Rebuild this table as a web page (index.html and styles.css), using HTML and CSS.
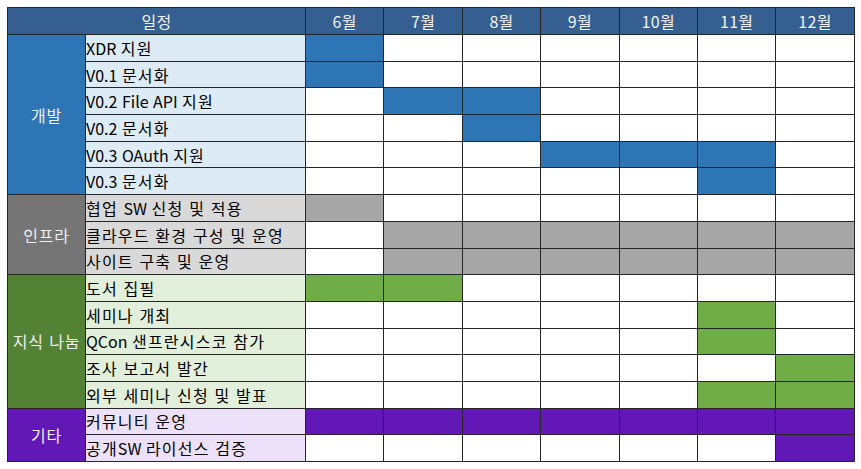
FILE: index.html
```html
<!DOCTYPE html>
<html lang="ko">
<head>
<meta charset="utf-8">
<title>일정</title>
<link rel="stylesheet" href="styles.css">
</head>
<body>
<table class="plan">
  <colgroup>
    <col class="c-cat"><col class="c-task">
    <col class="c-m"><col class="c-m"><col class="c-m"><col class="c-m"><col class="c-m"><col class="c-m"><col class="c-m">
  </colgroup>
  <thead>
    <tr class="head">
      <th colspan="2">일정</th>
      <th>6월</th><th>7월</th><th>8월</th><th>9월</th><th>10월</th><th>11월</th><th>12월</th>
    </tr>
  </thead>
  <tbody>
    <tr class="dev">
      <td class="cat" rowspan="6">개발</td>
      <td class="task"><span class="lat">XDR </span>지원</td>
      <td class="on"></td><td></td><td></td><td></td><td></td><td></td><td></td>
    </tr>
    <tr class="dev">
      <td class="task"><span class="lat">V0.1 </span>문서화</td>
      <td class="on"></td><td></td><td></td><td></td><td></td><td></td><td></td>
    </tr>
    <tr class="dev">
      <td class="task"><span class="lat">V0.2 File API </span>지원</td>
      <td></td><td class="on"></td><td class="on"></td><td></td><td></td><td></td><td></td>
    </tr>
    <tr class="dev">
      <td class="task"><span class="lat">V0.2 </span>문서화</td>
      <td></td><td></td><td class="on"></td><td></td><td></td><td></td><td></td>
    </tr>
    <tr class="dev">
      <td class="task"><span class="lat">V0.3 OAuth </span>지원</td>
      <td></td><td></td><td></td><td class="on"></td><td class="on"></td><td class="on"></td><td></td>
    </tr>
    <tr class="dev">
      <td class="task"><span class="lat">V0.3 </span>문서화</td>
      <td></td><td></td><td></td><td></td><td></td><td class="on"></td><td></td>
    </tr>

    <tr class="infra">
      <td class="cat" rowspan="3">인프라</td>
      <td class="task">협업 <span class="lat">SW </span>신청 및 적용</td>
      <td class="on"></td><td></td><td></td><td></td><td></td><td></td><td></td>
    </tr>
    <tr class="infra">
      <td class="task">클라우드 환경 구성 및 운영</td>
      <td></td><td class="on"></td><td class="on"></td><td class="on"></td><td class="on"></td><td class="on"></td><td class="on"></td>
    </tr>
    <tr class="infra">
      <td class="task">사이트 구축 및 운영</td>
      <td></td><td class="on"></td><td class="on"></td><td class="on"></td><td class="on"></td><td class="on"></td><td class="on"></td>
    </tr>

    <tr class="know">
      <td class="cat" rowspan="5">지식 나눔</td>
      <td class="task">도서 집필</td>
      <td class="on"></td><td class="on"></td><td></td><td></td><td></td><td></td><td></td>
    </tr>
    <tr class="know">
      <td class="task">세미나 개최</td>
      <td></td><td></td><td></td><td></td><td></td><td class="on"></td><td></td>
    </tr>
    <tr class="know">
      <td class="task"><span class="lat">QCon </span>샌프란시스코 참가</td>
      <td></td><td></td><td></td><td></td><td></td><td class="on"></td><td></td>
    </tr>
    <tr class="know">
      <td class="task">조사 보고서 발간</td>
      <td></td><td></td><td></td><td></td><td></td><td></td><td class="on"></td>
    </tr>
    <tr class="know">
      <td class="task">외부 세미나 신청 및 발표</td>
      <td></td><td></td><td></td><td></td><td></td><td class="on"></td><td class="on"></td>
    </tr>

    <tr class="etc">
      <td class="cat" rowspan="2">기타</td>
      <td class="task">커뮤니티 운영</td>
      <td class="on"></td><td class="on"></td><td class="on"></td><td class="on"></td><td class="on"></td><td class="on"></td><td class="on"></td>
    </tr>
    <tr class="etc">
      <td class="task">공개<span class="lat">SW </span>라이선스 검증</td>
      <td></td><td></td><td></td><td></td><td></td><td></td><td class="on"></td>
    </tr>
  </tbody>
</table>
</body>
</html>
```

FILE: styles.css
```css
html, body {
  margin: 0;
  padding: 0;
  background: #ffffff;
}
body {
  padding: 7px 0 0 7px;
  font-family: "Noto Sans CJK KR", "Noto Sans", sans-serif;
  font-size: 16px;
  color: #000;
}
.plan {
  border-collapse: collapse;
  table-layout: fixed;
  width: 847px;
}
.c-cat { width: 78px; }
.c-task { width: 220px; }
.c-m { width: 78.4px; }

.plan th,
.plan td {
  border: 1px solid #262626;
  padding: 0;
  line-height: 20px;
  background: #ffffff;
}
.head th {
  height: 26px;
  background: #355f91;
  color: #f2f2f2;
  font-weight: normal;
  text-align: center;
  letter-spacing: 0.3px;
}
.plan tbody tr {
  height: 26.7px;
}
.cat {
  text-align: center;
  vertical-align: middle;
  color: #f0f0f0;
  letter-spacing: 0.8px;
}
.task {
  text-align: left;
  padding-left: 1px;
  white-space: nowrap;
  letter-spacing: 1.2px;
}
.lat {
  letter-spacing: 0;
}

.dev .cat { background: #2e75b6; }
.dev .task { background: #ddebf7; }
.dev .on { background: #2e75b6; }

.infra .cat { background: #757575; }
.infra .task { background: #d9d9d9; }
.infra .on { background: #a6a6a6; }

.know .cat { background: #548235; }
.know .task { background: #e2efda; }
.know .on { background: #70ad47; }

.etc .cat { background: #6118b5; }
.etc .task { background: #ede1fa; }
.etc .on { background: #6118b5; }
```
